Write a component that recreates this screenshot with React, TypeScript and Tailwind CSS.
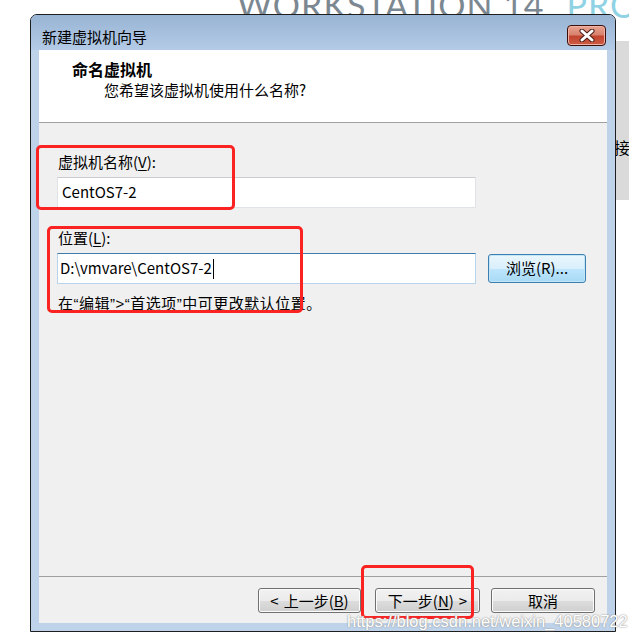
import React from 'react'

const ui = { fontFamily: '"Noto Sans CJK SC", "Noto Sans", sans-serif' }

function WinButton({ children, className = '' }: { children: React.ReactNode; className?: string }) {
  return (
    <div
      className={`flex h-[25px] items-center justify-center rounded-[3px] border border-[#707070] bg-[linear-gradient(#f2f2f2_0%,#ebebeb_50%,#dddddd_51%,#cfcfcf_100%)] text-[15px] leading-none text-black shadow-[inset_0_0_0_1px_#fcfcfc] ${className}`}
    >
      {children}
    </div>
  )
}

function CloseButton() {
  return (
    <div className="flex h-[21px] w-[39px] items-center justify-center rounded-[4px] border border-[#3c0f0a] bg-[linear-gradient(#e8a493_0%,#d9826d_45%,#c3452f_55%,#cc5c45_100%)] shadow-[inset_0_0_0_1px_#f0b2a4]">
      <svg width="16" height="13" viewBox="0 0 16 13">
        <path d="M3 2 L13 11 M13 2 L3 11" stroke="#4a1e18" strokeWidth="5" strokeLinecap="round" />
        <path d="M3 2 L13 11 M13 2 L3 11" stroke="#ffffff" strokeWidth="3" strokeLinecap="round" />
      </svg>
    </div>
  )
}

const q = 'font-["Liberation_Sans"]'

export default function App() {
  return (
    <div className="relative h-[641px] w-[629px] overflow-hidden bg-white" style={ui}>
      {/* product banner behind the dialog */}
      <div className="absolute left-[237px] top-[-12px] whitespace-nowrap font-['Lato'] text-[34px] leading-none tracking-[1px] text-[#7c8891]">
        WORKSTATION 14<span className="ml-[22px] text-[#8fd2e4]">PRO</span>
      </div>

      {/* gray panel peeking out on the right */}
      <div className="absolute left-[612px] top-[41px] h-[159px] w-[17px] bg-[#dadada]">
        <span className="absolute left-[2px] top-[98px] text-[16px] leading-none text-black">接</span>
      </div>

      {/* wizard window */}
      <div className="absolute left-[30px] top-[14px] flex h-[618px] w-[586px] flex-col rounded-t-[7px] border border-[#1e1e1e] bg-[#bed3ea]">
        <div className="flex h-[35px] shrink-0 items-start justify-between rounded-t-[6px] bg-[linear-gradient(#98b4d4,#b3cbe6)] pl-[11px] pr-[9px]">
          <span className="mt-[12px] text-[15px] leading-[20px] text-black">新建虚拟机向导</span>
          <div className="mt-[10px]">
            <CloseButton />
          </div>
        </div>

        <div className="mx-[8px] flex flex-1 flex-col bg-[#f0f0f0]">
          {/* header */}
          <div className="h-[73px] shrink-0 border-b border-[#a0a0a0] bg-white pl-[33px] pt-[9px]">
            <div className="text-[16px] font-bold leading-[20px] text-black">命名虚拟机</div>
            <div className="mt-[1px] pl-[32px] text-[15px] leading-[20px] text-black">您希望该虚拟机使用什么名称?</div>
          </div>

          {/* body */}
          <div className="flex-1 pl-[18px] pt-[29px] text-[15px] text-black">
            <div className="pl-[1px] leading-[20px]">
              虚拟机名称(<span className="underline underline-offset-2">V</span>):
            </div>
            <div className="mt-[5px] flex h-[31px] w-[419px] items-center border border-[#dfe3e8] border-t-[#c9ccd1] bg-white pl-[4px]">
              CentOS7-2
            </div>

            <div className="mt-[20px] pl-[1px] leading-[20px]">
              位置(<span className="underline underline-offset-2">L</span>):
            </div>
            <div className="mt-[5px] flex items-center gap-[12px]">
              <div className="flex h-[31px] w-[419px] items-center border border-[#b7d4ec] border-t-[#3d7bad] bg-white pl-[2px]">
                D:\vmvare\CentOS7-2
                <span className="ml-[1px] h-[20px] w-[1px] bg-black" />
              </div>
              <div className="flex h-[29px] w-[98px] items-center justify-center rounded-[3px] border border-[#3c7fb1] bg-[linear-gradient(#eaf6fd_0%,#d9f0fc_50%,#bee6fd_51%,#a7d9f5_100%)] shadow-[inset_0_0_0_1px_#c4e5f6]">
                浏览(R)...
              </div>
            </div>

            <div className="mt-[9px] pl-[1px] leading-[20px] tracking-[0.5px]">
              在<span className={q}>“</span>编辑<span className={q}>”&gt;“</span>首选项<span className={q}>”</span>中可更改默认位置。
            </div>
          </div>

          {/* footer */}
          <div className="flex h-[47px] shrink-0 items-start justify-end border-t border-[#a0a0a0] pr-[12px] pt-[11px]">
            <WinButton className="w-[103px] gap-[5px]">
              <span>&lt;</span>
              <span>
                上一步(<span className="underline underline-offset-2">B</span>)
              </span>
            </WinButton>
            <WinButton className="ml-[14px] w-[105px] gap-[5px]">
              <span>
                下一步(<span className="underline underline-offset-2">N</span>)
              </span>
              <span>&gt;</span>
            </WinButton>
            <WinButton className="ml-[11px] w-[104px]">取消</WinButton>
          </div>
        </div>
        <div className="h-[8px] shrink-0" />
      </div>

      {/* red annotation boxes */}
      <div className="absolute left-[36px] top-[145px] h-[65px] w-[199px] rounded-[5px] border-[3px] border-[#fb2222]" />
      <div className="absolute left-[47px] top-[226px] h-[87px] w-[256px] rounded-[5px] border-[3px] border-[#fb2222]" />
      <div className="absolute left-[361px] top-[565px] h-[54px] w-[113px] rounded-[5px] border-[3px] border-[#fb2222]" />

      {/* watermark */}
      <div className="absolute left-[347px] top-[611px] whitespace-nowrap font-['Liberation_Sans'] text-[16.5px] leading-[20px] text-white [text-shadow:0_0_2px_#9a9a9a,0_0_1px_#9a9a9a]">
        https://blog.csdn.net/weixin_40580722
      </div>
    </div>
  )
}
